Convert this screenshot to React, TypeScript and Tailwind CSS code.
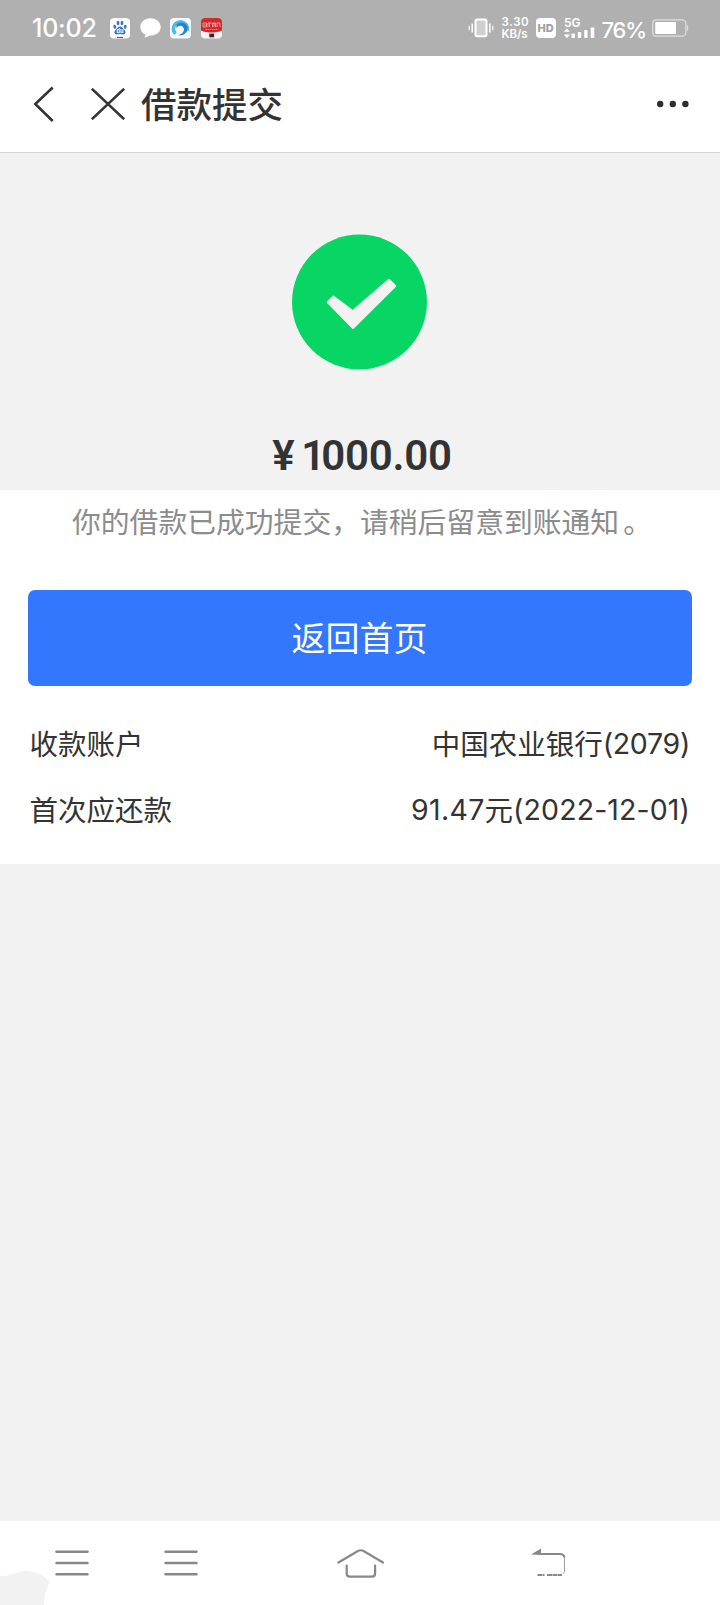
import { type ReactNode } from "react"
import clsx from "clsx"

const rows = [
  { label: "收款账户", value: "中国农业银行", suffix: "(2079)" },
  { label: "首次应还款", prefix: "91.47", value: "元", suffix: "(2022-12-01)" },
]

const Digits = ({
  children,
  className,
}: {
  children: ReactNode
  className?: string
}) => (
  <span
    className={clsx(
      "font-['Inter','Noto_Sans_CJK_SC',sans-serif]",
      className,
    )}
  >
    {children}
  </span>
)

const BaiduIcon = () => (
  <svg width="20" height="21" viewBox="0 0 20 21">
    <rect width="20" height="20.5" rx="4" fill="#fff" />
    <g fill="#3d74c6">
      <ellipse cx="4.8" cy="8.8" rx="1.4" ry="2" transform="rotate(-15 4.8 8.8)" />
      <ellipse cx="8" cy="5" rx="1.4" ry="2.2" />
      <ellipse cx="12" cy="5" rx="1.4" ry="2.2" />
      <ellipse cx="15.2" cy="8.8" rx="1.4" ry="2" transform="rotate(15 15.2 8.8)" />
      <path d="M10 8.6c2 0 2.8 1.7 4 2.8 2.4 2.1 1.9 5-.8 5-1.2 0-2-.3-3.2-.3s-2 .3-3.2.3c-2.7 0-3.2-2.9-.8-5 1.2-1.1 2-2.8 4-2.8z" />
    </g>
    <text
      x="10"
      y="15.2"
      textAnchor="middle"
      fontSize="5.5"
      fontWeight="700"
      fill="#fff"
      fontFamily="Inter, sans-serif"
    >
      du
    </text>
    <path d="M7 19.4h6" stroke="#4a4a66" strokeWidth="1" />
  </svg>
)

const BubbleIcon = () => (
  <svg width="21" height="20" viewBox="0 0 21 20">
    <path
      d="M10.5.3C4.8.3.3 4.1.3 9c0 3.7 2 6.3 5.3 7.8-.1 1.1-.7 1.9-1.4 2.7 2.3 0 3.9-.8 5.2-1.9 6.3.4 11.3-3.4 11.3-8.6C20.7 4.1 16.2.3 10.5.3z"
      fill="#fff"
    />
  </svg>
)

const BrowserIcon = () => (
  <svg width="21" height="21" viewBox="0 0 21 21">
    <rect width="21" height="20.5" rx="4" fill="#f4fafd" />
    <path
      d="M5.500 15.800A7 7 0 1 1 17.200 12.500"
      fill="none"
      stroke="#4fb9e8"
      strokeWidth="3.4"
    />
    <path
      d="M6.500 6.300C10 3.200 15.500 4 17.300 8.300c1.300 3.300-.6 7-4.500 8.600-1.600.6-3.300.6-4.500.2 3.200-.8 5.700-3 5.700-5.600 0-2.300-1.800-3.800-4-3.700-1.800.1-3.200 1.300-3.700 3z"
      fill="#1f87cc"
    />
  </svg>
)

const StoreIcon = () => (
  <svg width="21" height="21" viewBox="0 0 21 21">
    <rect width="21" height="20.5" rx="4" fill="#f7f1f1" />
    <path d="M4 0h13a4 4 0 0 1 4 4v8.5c-3 1.6-6.5 2-10.500 2S3 14.100 0 12.500V4a4 4 0 0 1 4-4z" fill="#d2292e" />
    <path
      d="M2 5h3.500v4H2zM7 9V5h3.500M8.500 5v4M11.500 9V5h3v4M13 5v4M16 9V5h3v4M3 7h3"
      fill="none"
      stroke="#f2b3b3"
      strokeWidth=".8"
    />
    <path d="M4.500 11.400h12" stroke="#ee9a9a" strokeWidth=".9" strokeDasharray="1.5 .6" />
    <rect x="8.3" y="15.6" width="4.8" height="3.7" fill="#38252c" />
  </svg>
)

const VibrateIcon = () => (
  <svg width="26" height="20" viewBox="0 0 26 20" fill="none" stroke="#fff">
    <rect x="7.5" y="1.6" width="11" height="16.6" rx="1.6" strokeWidth="2" fill="#cfcfcf" />
    <path d="M4.200 5.500v9M21.800 5.500v9" strokeWidth="1.5" />
    <path d="M1.200 7.700v4.600M24.800 7.700v4.600" strokeWidth="1.2" />
  </svg>
)

const SignalIcon = () => (
  <svg width="33" height="24" viewBox="0 -3 33 24" fill="#fff">
    <text
      x="1"
      y="9.3"
      fontSize="12"
      fontWeight="600"
      fontFamily="Inter, sans-serif"
    >
      5G
    </text>
    <path d="M.8 13.800 3.900 10.500 7 13.800zM.8 16.500h6.200l-3.100 3.700z" />
    <rect x="8.5" y="15.5" width="3.4" height="4.5" rx=".8" />
    <rect x="14.8" y="14" width="3.4" height="6" rx=".8" />
    <rect x="21.2" y="12" width="3.4" height="8" rx=".8" />
    <rect x="27.7" y="9.5" width="3.6" height="10.5" rx=".8" />
  </svg>
)

const BatteryIcon = () => (
  <svg width="37" height="18" viewBox="0 0 37 18">
    <rect x=".8" y=".8" width="33" height="16.4" rx="3.5" fill="none" stroke="#dedede" strokeWidth="1.3" />
    <rect x="3.2" y="3" width="20.8" height="12" rx="1" fill="#fff" />
    <path d="M35.500 6.500v5" stroke="#dedede" strokeWidth="1.3" />
  </svg>
)

const StatusBar = () => (
  <div className="flex h-14 shrink-0 items-center bg-[#b0b0b0] pl-8 text-white">
    <Digits className="w-[78px] text-[25px] leading-none font-medium tracking-[-0.2px]">
      10:02
    </Digits>
    <div className="flex items-center gap-[9.5px]">
      <BaiduIcon />
      <BubbleIcon />
      <BrowserIcon />
      <StoreIcon />
    </div>
    <div className="ml-[246px] flex items-center">
      <VibrateIcon />
      <Digits className="ml-2 w-[34px] text-[11.5px] leading-3 font-semibold">
        <span className="block tracking-[0.6px]">3.30</span>
        <span className="block tracking-[-0.1px]">KB/s</span>
      </Digits>
      <span className="flex h-5 w-5 items-center justify-center rounded-[4px] bg-white font-['Inter',sans-serif] text-[11px] font-extrabold tracking-[-0.2px] text-[#a0a0a0]">
        HD
      </span>
      <span className="-mt-[3px] ml-[7px]">
        <SignalIcon />
      </span>
      <Digits className="ml-1.5 w-[50px] pt-1 text-[22px] leading-none font-medium whitespace-nowrap tracking-[-1.2px]">
        76%
      </Digits>
      <BatteryIcon />
    </div>
  </div>
)

const TitleBar = () => (
  <header className="flex h-[97px] shrink-0 items-center border-b border-[#d6d6d6] bg-white pr-[31px] pl-8">
    <svg width="23" height="36" viewBox="0 0 23 36" fill="none" stroke="#333" strokeWidth="2.6">
      <path d="M20.700 1.500 3.300 18l17.400 17" />
    </svg>
    <svg className="ml-9" width="34" height="32" viewBox="0 0 34 32" fill="none" stroke="#333" strokeWidth="2.6">
      <path d="M.8.8 33.200 31.200M33.200.8.8 31.200" />
    </svg>
    <h1 className="ml-4 pb-[3px] text-[35.5px] leading-none font-medium">借款提交</h1>
    <svg className="ml-auto" width="32" height="8" viewBox="0 0 32 8" fill="#2d2d2d">
      <circle cx="3.2" cy="4" r="3.2" />
      <circle cx="15.8" cy="4" r="3.2" />
      <circle cx="28.4" cy="4" r="3.2" />
    </svg>
  </header>
)

const MenuIcon = () => (
  <svg width="34" height="28" viewBox="0 0 34 28" stroke="#888" strokeWidth="2.5" strokeLinecap="round">
    <path d="M1.500 2.700h31M1.500 14h31M1.500 25.300h31" />
  </svg>
)

const NavBar = () => (
  <nav className="relative flex h-[84px] shrink-0 items-center overflow-hidden bg-white pl-[55px]">
    <svg className="absolute bottom-0 left-0" width="52" height="36" viewBox="0 0 52 36">
      <path d="M0 7C9 8 18 1 28 2c9 1 15 4 22 11-4 6-6 14-6 23H0z" fill="#f2f2f2" />
    </svg>
    <MenuIcon />
    <span className="ml-[74.5px]">
      <MenuIcon />
    </span>
    <svg className="ml-[139px]" width="48" height="32" viewBox="0 0 48 32" fill="none" stroke="#888" strokeWidth="2.2" strokeLinecap="round">
      <path d="M1.500 15.500 20.500 4.200Q23.800 2.300 27 4.200L46 15.500M9.700 18.500v8q0 3.200 3.200 3.200h22q3.200 0 3.200-3.200v-8" />
    </svg>
    <svg className="ml-[146px]" width="36" height="30" viewBox="0 0 36 30" fill="none" stroke="#888">
      <path d="M8 6h21q4 0 4.300 3.500" strokeWidth="2.2" />
      <path d="M0 6.500 10 .5V7z" fill="#888" stroke="none" />
      <path d="M33.500 9v15l-2 2" strokeWidth=".8" />
      <path d="M6.500 27h7M16 27h15" strokeWidth="2.2" strokeDasharray="5 .5" />
    </svg>
  </nav>
)

const App = () => (
  <div className="flex h-[1605px] w-[720px] flex-col overflow-hidden bg-[#f2f2f2] font-['Noto_Sans_CJK_SC',sans-serif] text-[#333]">
    <StatusBar />
    <TitleBar />

    {/* Result */}
    <section className="flex h-[337px] shrink-0 flex-col items-center pt-[81px]">
      <svg width="136" height="136" viewBox="0 0 136 136">
        <circle cx="67.5" cy="68" r="67.5" fill="#07d664" />
        <path
          d="m35.700 68.300 5.600-5.700 19.400 14.500L97 45.700l6.300 6.300L61 94z"
          fill="#f2f2f2"
          stroke="#f2f2f2"
          strokeWidth="2"
          strokeLinejoin="round"
        />
      </svg>
      <p className="mt-[65px] flex items-center pl-1 font-['Roboto',sans-serif] text-[42px] leading-none font-semibold">
        <span className="w-[29px]">¥</span>
        <span className="tracking-[-4px]">1</span>
        <span className="tracking-[-0.2px]">000.00</span>
      </p>
    </section>

    {/* Details */}
    <section className="flex h-[374px] shrink-0 flex-col bg-white px-7">
      <p className="mt-[16px] pl-[44px] text-[28.8px] leading-[30px] whitespace-nowrap text-[#8c8c8c]">
        你的借款已成功提交，请稍后留意到账通知<span className="ml-1">。</span>
      </p>
      <button
        type="button"
        className="mt-[54px] h-24 shrink-0 rounded-[7px] bg-[#3377ff] pr-px pb-[3px] text-[34px] leading-none text-white"
      >
        返回首页
      </button>
      <dl className="mt-[24px] pr-[2px] pl-[1.5px] text-[28.5px]">
        {rows.map((row) => (
          <div key={row.label} className="flex h-[66px] items-center justify-between leading-none">
            <dt>{row.label}</dt>
            <dd className="flex items-center">
              {row.prefix && (
                <Digits className="pt-[3px] tracking-[0.3px]">{row.prefix}</Digits>
              )}
              <span>{row.value}</span>
              <Digits
                className={clsx(
                  "pt-[3px]",
                  row.prefix ? "tracking-[0.1px]" : "tracking-[-0.3px]",
                )}
              >
                {row.suffix}
              </Digits>
            </dd>
          </div>
        ))}
      </dl>
    </section>

    <main className="flex-1" />
    <NavBar />
  </div>
)

export default App
